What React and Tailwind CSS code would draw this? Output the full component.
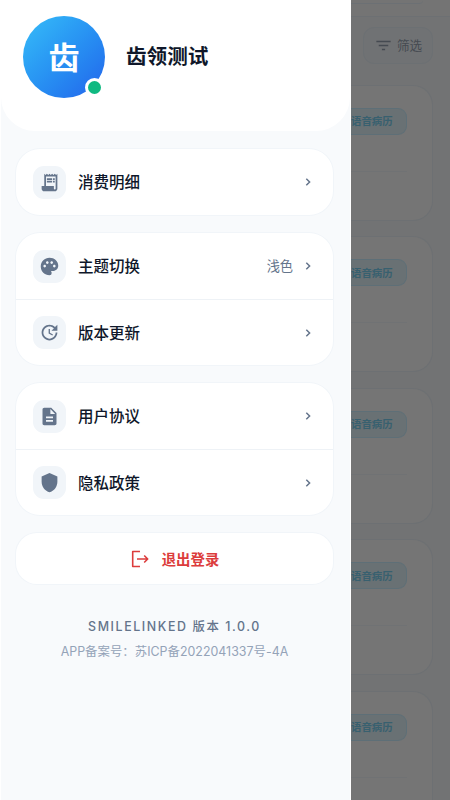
import { MdReceiptLong, MdPalette, MdUpdate, MdDescription, MdShield, MdFilterList } from "react-icons/md";

function Chevron() {
  return (
    <svg viewBox="0 0 10 10" className="h-[10px] w-[10px] shrink-0" fill="none" stroke="#64748b" strokeWidth="1.5">
      <path d="M3.3 1.8 6.6 5 3.3 8.2" />
    </svg>
  );
}

function Row({ icon: Icon, label, value, divided }) {
  return (
    <div className={`flex h-[66px] items-center pr-[20px] pl-[17px] ${divided ? "border-t border-[#eef2f6]" : ""}`}>
      <div className="flex h-[33px] w-[33px] shrink-0 items-center justify-center rounded-[11px] bg-[#f1f5f9]">
        <Icon className="h-[21px] w-[21px] text-[#64748b]" />
      </div>
      <span className="mb-[2px] ml-3 flex-1 text-[15.5px] leading-6 font-medium text-[#0f172a]">{label}</span>
      {value && <span className="mr-[10px] mb-[1px] text-[13.2px] leading-5 text-[#64748b]">{value}</span>}
      <Chevron />
    </div>
  );
}

function Group({ children }) {
  return <section className="overflow-hidden rounded-[24px] bg-white ring-1 ring-[#f1f5f9]">{children}</section>;
}

function RecordCard() {
  return (
    <div className="mr-[17px] h-[136px] shrink-0 rounded-r-[20px] border border-l-0 border-[#6d7073] bg-[#757575] pt-[22px] pr-[25px]">
      <div className="flex h-[27px] items-center rounded-r-[9px] border border-l-0 border-[#5e6f77] bg-[#697174] text-[10.4px] font-bold whitespace-nowrap text-[#38606f]">
        语音病历
      </div>
      <div className="mt-[36px] h-px bg-[#707274]" />
    </div>
  );
}

export default function App() {
  return (
    <div className="flex h-[800px] w-[450px] overflow-hidden font-['Noto_Sans_CJK_SC',sans-serif]">
      <aside className="w-[351px] shrink-0 border-x border-white bg-[#f8fafc]">
        <header className="flex h-[131px] rounded-b-[34px] bg-white pt-4 pl-[22px]">
          <div className="relative flex h-[82px] w-[82px] items-center justify-center rounded-full bg-linear-to-br from-[#38bdf8] to-[#2563eb] pb-[2px] text-[31px] font-bold text-white">
            齿
            <span className="absolute right-[1px] bottom-[1px] h-[19px] w-[19px] rounded-full border-[3px] border-white bg-[#10b981]" />
          </div>
          <h1 className="mt-[23px] ml-[21px] text-[20.6px] leading-8 font-bold text-[#0f172a]">齿领测试</h1>
        </header>
        <main className="flex flex-col gap-[18px] pt-[18px] pr-[17px] pl-[15px]">
          <Group>
            <Row icon={MdReceiptLong} label="消费明细" />
          </Group>
          <Group>
            <Row icon={MdPalette} label="主题切换" value="浅色" />
            <Row icon={MdUpdate} label="版本更新" divided />
          </Group>
          <Group>
            <Row icon={MdDescription} label="用户协议" />
            <Row icon={MdShield} label="隐私政策" divided />
          </Group>
          <button className="flex h-[51px] items-center justify-center rounded-[21px] bg-white text-[14.4px] font-bold text-[#dc3c3c] ring-1 ring-[#f1f5f9]">
            <svg viewBox="0 0 20 20" className="mr-[12px] h-5 w-5" fill="none" stroke="currentColor" strokeWidth="1.6" strokeLinejoin="round">
              <path d="M10 2.5H2.7v15H10M7 10h10.5M14.2 6.5 17.7 10l-3.5 3.5" />
            </svg>
            退出登录
          </button>
        </main>
        <footer className="mt-[31px] flex flex-col items-center pr-[2px] font-['Inter','Noto_Sans_CJK_SC',sans-serif] whitespace-nowrap">
          <p className="text-[12.4px] leading-6 font-medium tracking-[1.6px] text-[#64748b]">SMILELINKED 版本 1.0.0</p>
          <p className="text-[12.4px] leading-[26px] tracking-[0.02px] text-[#94a3b8]">APP备案号：苏ICP备2022041337号-4A</p>
        </footer>
      </aside>
      <div className="flex h-[800px] w-[99px] flex-col overflow-hidden bg-[#727374]">
        <div className="h-[17px] shrink-0 border-b border-[#6d7073] bg-[#747474]">
          <div className="mr-[27px] h-[4px] rounded-br-[6px] border-b border-[#6c7074]" />
        </div>
        <div className="mt-[10px] mr-[17px] ml-[12px] flex h-[37px] shrink-0 items-center rounded-[11px] border border-[#6c7073] bg-[#707274] pl-[10px] text-[12.6px] text-[#454a51]">
          <MdFilterList className="mr-[4px] h-[19px] w-[19px]" />
          筛选
        </div>
        <div className="mt-[20.5px] flex flex-col gap-[15.5px]">
          <RecordCard />
          <RecordCard />
          <RecordCard />
          <RecordCard />
          <RecordCard />
        </div>
      </div>
    </div>
  );
}
